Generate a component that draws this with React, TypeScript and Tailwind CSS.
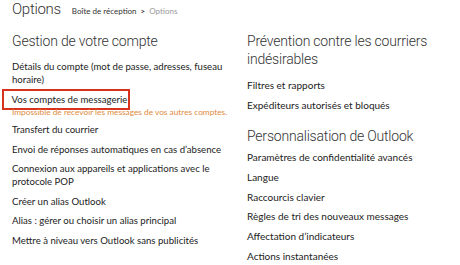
const leftItems: { label: string[]; highlight?: boolean; note?: string }[] = [
  { label: ['Détails du compte (mot de passe, adresses, fuseau', 'horaire)'] },
  {
    label: ['Vos comptes de messagerie'],
    highlight: true,
    note: 'Impossible de recevoir les messages de vos autres comptes.',
  },
  { label: ['Transfert du courrier'] },
  { label: ['Envoi de réponses automatiques en cas d’absence'] },
  { label: ['Connexion aux appareils et applications avec le', 'protocole POP'] },
  { label: ['Créer un alias Outlook'] },
  { label: ['Alias : gérer ou choisir un alias principal'] },
  { label: ['Mettre à niveau vers Outlook sans publicités'] },
];

const spamItems = ['Filtres et rapports', 'Expéditeurs autorisés et bloqués'];

const customItems = [
  'Paramètres de confidentialité avancés',
  'Langue',
  'Raccourcis clavier',
  'Règles de tri des nouveaux messages',
  'Affectation d’indicateurs',
  'Actions instantanées',
];

function Heading({ children }: { children: React.ReactNode }) {
  return (
    <h2 className="whitespace-nowrap font-['Roboto',sans-serif] text-[14px] leading-[18px] font-light tracking-[-0.2px] text-[#333]">
      {children}
    </h2>
  );
}

export default function App() {
  return (
    <div className="w-[460px] h-[265px] overflow-hidden bg-white pl-[12px] font-['Lato','Open_Sans',sans-serif] text-[#222]">
      <div className="flex items-baseline">
        <h1 className="font-['Roboto',sans-serif] text-[15px] leading-[18px] font-light tracking-[-0.3px] text-[#333]">
          Options
        </h1>
        <div className="ml-[11px] flex items-baseline text-[8px] text-[#333]">
          <span>Boîte de réception</span>
          <span className="mx-[4px] font-bold">&gt;</span>
          <span className="text-[#999]">Options</span>
        </div>
      </div>

      <div className="flex mt-[14px]">
        <div className="w-[235px] shrink-0">
          <Heading>Gestion de votre compte</Heading>
          <ul className="mt-[10px] whitespace-nowrap text-[9.6px] leading-[13px]">
            {leftItems.map((item) =>
              item.highlight ? (
                <li key={item.label[0]} className="mb-[4.5px]">
                  <div className="-ml-[10.5px] -my-[4px] inline-block border-[2.5px] border-[#d8321e] py-[2px] pl-[8px] pr-[1px]">
                    {item.label[0]}
                  </div>
                  <div className="text-[8.3px] leading-[13px] text-[#e08a3c]">{item.note}</div>
                </li>
              ) : (
                <li key={item.label[0]} className="mb-[6.5px]">
                  {item.label.map((line) => (
                    <div key={line}>{line}</div>
                  ))}
                </li>
              ),
            )}
          </ul>
          <div className="mt-[15px]">
            <Heading>Rédaction de courrier</Heading>
          </div>
        </div>

        <div className="flex-1">
          <Heading>
            Prévention contre les courriers
            <br />
            indésirables
          </Heading>
          <ul className="mt-[11px] whitespace-nowrap text-[10px] leading-[13px]">
            {spamItems.map((t) => (
              <li key={t} className="mb-[7px]">
                {t}
              </li>
            ))}
          </ul>
          <div className="mt-[15px]">
            <Heading>Personnalisation de Outlook</Heading>
          </div>
          <ul className="mt-[6px] whitespace-nowrap text-[10px] leading-[13px]">
            {customItems.map((t) => (
              <li key={t} className="mb-[6.8px]">
                {t}
              </li>
            ))}
          </ul>
        </div>
      </div>
    </div>
  );
}
